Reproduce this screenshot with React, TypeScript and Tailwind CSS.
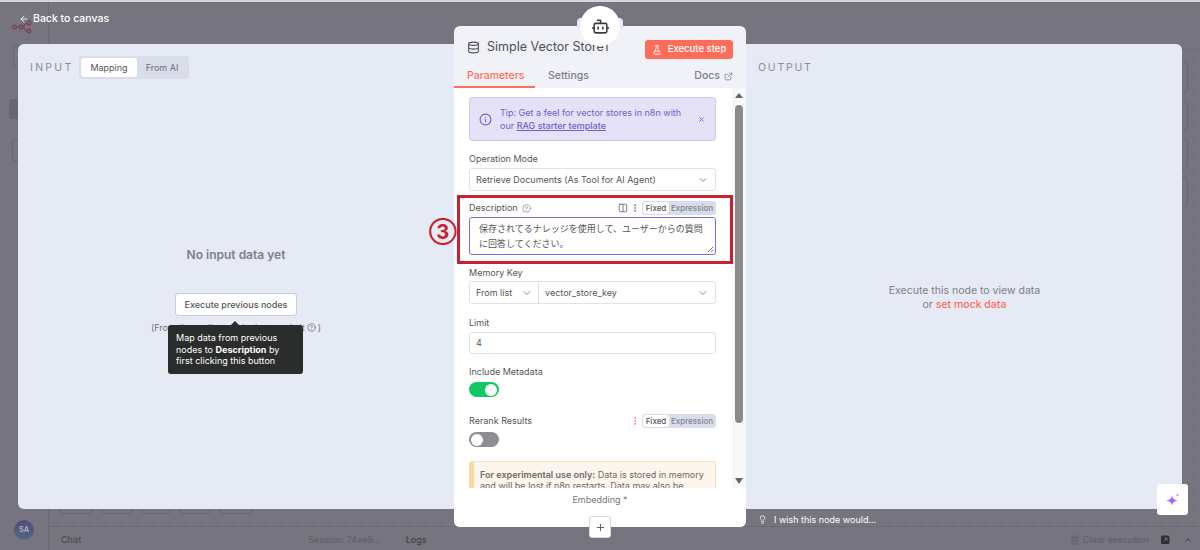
import { ArrowLeft, Bot, ChevronDown, ChevronUp, CircleHelp, Columns2, Database, EllipsisVertical, ExternalLink, FlaskConical, Info, Lightbulb, Plus, Trash2, X } from "lucide-react";

const font = { fontFamily: '"Inter", "Noto Sans CJK JP", sans-serif' };

function FixedExpression() {
  return (
    <div className="flex h-[14px] w-[74px] items-center rounded-[3px] bg-[#d9dde9] p-px text-[8px] font-medium">
      <span className="flex h-[12px] w-[26px] items-center justify-center rounded-[3px] bg-white text-[#555]">Fixed</span>
      <span className="flex-1 text-center text-[#7d8192]">Expression</span>
    </div>
  );
}

function Label({ children }: { children: React.ReactNode }) {
  return <div className="text-[9px] leading-[12px] text-[#555]">{children}</div>;
}

function Background() {
  return (
    <div className="flex h-full">
      <aside className="flex w-[49px] flex-col border-r border-[#6b6973] pl-[13px] pt-[18px]">
        <svg width="24" height="14" viewBox="0 0 24 14" fill="none" stroke="#7d3b55" strokeWidth="1.2" className="-ml-[1px]">
          <circle cx="2.5" cy="7" r="1.8" />
          <circle cx="9" cy="7" r="1.8" />
          <circle cx="17" cy="3" r="1.8" />
          <circle cx="17" cy="11" r="1.8" />
          <path d="M4.3 7 H7.2 M10.8 7 C13 7 12 3 15.2 3 M10.8 7 C13 7 12 11 15.2 11" />
        </svg>
        <div className="mt-[11px] h-[22px] w-[22px] rounded-[4px] border border-[#66646f]" />
        <div className="-ml-[4px] mt-[32px] h-[20px] w-[30px] rounded-[3px] bg-[#686672]" />
        <div className="-ml-[1px] mt-[20px] h-[23px] w-[23px] rounded-[4px] border border-[#66646f]" />
        <div className="mb-[10px] ml-[1px] mt-auto flex h-[20px] w-[20px] items-center justify-center self-start rounded-full bg-gradient-to-b from-[#55497f] to-[#4a6a83] text-[7.5px] font-medium text-[#b9b9c8]">SA</div>
      </aside>
      <main className="flex flex-1 flex-col">
        <div className="h-[48px] border-b border-[#6f6d78]" />
        <div className="flex flex-1 flex-col justify-between bg-[radial-gradient(#6e6c77_1px,transparent_1px)] bg-[length:16px_16px]">
          <div className="flex flex-col items-end gap-[7px] pr-[12px] pt-[12px]">
            {[0, 1, 2, 3].map((i) => (
              <div key={i} className="h-[31px] w-[30px] rounded-[4px] border border-[#686672]" />
            ))}
          </div>
          <div className="flex gap-[9px] pb-[12px] pl-[11px]">
            {[32, 31, 30, 31, 32].map((w, i) => (
              <div key={i} style={{ width: w }} className="h-[24px] rounded-[4px] border border-[#686672]" />
            ))}
          </div>
        </div>
        <div className="flex h-[24px] items-center border-t border-[#6b6973] pt-[2px] text-[9px]">
          <span className="ml-[12px] font-medium text-[#4a4a53]">Chat</span>
          <span className="ml-[227px] text-[#5d5c67]">Session: 74ee9...</span>
          <span className="ml-[25px] font-medium text-[#3f3f48]">Logs</span>
          <span className="ml-auto flex items-center gap-[3px] text-[#5d5c67]">
            <Trash2 size={10} /> Clear execution
          </span>
          <svg width="10" height="10" viewBox="0 0 10 10" className="ml-[11px]">
            <rect x="1" y="0.5" width="8.5" height="8.5" rx="1.5" fill="#2f2f36" />
            <path d="M3.5 6.5 L7 3 M4.5 3 H7 V5.5" stroke="#76747f" strokeWidth="0.9" fill="none" />
          </svg>
          <ChevronUp size={10} className="ml-[13px] mr-[7px] text-[#2f2f36]" />
        </div>
      </main>
    </div>
  );
}

function NodeCard() {
  return (
    <div className="absolute left-[454px] top-[26px] flex h-[501px] w-[292px] flex-col rounded-[6px] bg-[#f1f2f8]">
      <div className="flex h-[33px] items-end justify-between px-[13px]">
        <div className="flex items-center gap-[7px] pb-[2px] text-[12.5px] text-[#4f4f55]">
          <Database size={13} />
          <span>Simple Vector Store1</span>
        </div>
        <div className="flex h-[19px] w-[88px] items-center justify-center gap-[6px] rounded-[3px] bg-[#ff6d5a] text-[9.5px] font-medium text-white">
          <FlaskConical size={10} />
          Execute step
        </div>
      </div>

      {/* node icon sits on the top edge, over the title */}
      <div className="absolute left-[123px] top-[-8px] h-[10px] w-[46px] rounded-t-[4px] bg-[#e6eaf4]" />
      <div className="absolute left-[126px] top-[-20px] flex h-[40px] w-[40px] items-center justify-center rounded-full bg-white">
        <Bot size={19} strokeWidth={2} className="text-[#3d3d42]" />
      </div>

      <div className="mt-[10px] flex h-[14px] items-center justify-between pr-[13px] text-[10.5px] font-medium text-[#7d7d87]">
        <div className="flex">
          <span className="w-[81px] pl-[13px] text-[#ff6d5a]">Parameters</span>
          <span className="ml-[13px]">Settings</span>
        </div>
        <div className="flex items-center gap-[4px]">
          Docs
          <ExternalLink size={9} />
        </div>
      </div>
      <div className="mt-[3px] h-[2px] w-[81px] bg-[#ff6d5a]" />

      <div className="flex min-h-0 flex-1 flex-col rounded-b-[6px] bg-white">
        <div className="flex h-[400px]">
          <div className="w-[278px] overflow-hidden pl-[15px] pr-[16px] pt-[9px]">
            <div className="flex h-[44px] items-center rounded-[3px] border border-[#cfc9ee] bg-[#e5e1f7] pl-[9px] pr-[10px] text-[9px] leading-[13px] text-[#6f5fd0]">
              <Info size={13} className="shrink-0" />
              <div className="ml-[8px] flex-1">
                Tip: Get a feel for vector stores in n8n with
                <br />
                our <span className="font-medium underline">RAG starter template</span>
              </div>
              <X size={7} className="shrink-0" strokeWidth={3} />
            </div>

            <div className="mt-[12px]"><Label>Operation Mode</Label></div>
            <div className="mt-[3px] flex h-[23px] items-center justify-between rounded-[3px] border border-[#dfe2ea] px-[6px] text-[9px] text-[#555]">
              Retrieve Documents (As Tool for AI Agent)
              <ChevronDown size={12} className="text-[#8d8d95]" />
            </div>

            <div className="mt-[10px] flex h-[14px] items-center justify-between">
              <div className="flex items-center gap-[4px]">
                <Label>Description</Label>
                <CircleHelp size={9} className="text-[#8d8d95]" />
              </div>
              <div className="flex items-center gap-[2px] text-[#666]">
                <Columns2 size={10} />
                <EllipsisVertical size={10} />
                <FixedExpression />
              </div>
            </div>
            <div className="relative mt-[2px] h-[38px] rounded-[3px] border border-[#7b6fd6] px-[9px] py-[3px] text-[9px] leading-[15px] text-[#555]">
              保存されてるナレッジを使用して、ユーザーからの質問に回答してください。
              <svg width="7" height="7" viewBox="0 0 7 7" stroke="#555" strokeWidth="0.8" className="absolute bottom-[1px] right-[1px]">
                <path d="M1 6 L6 1 M4 6 L6 4" />
              </svg>
            </div>

            <div className="mt-[12px]"><Label>Memory Key</Label></div>
            <div className="mt-[2px] flex h-[23px] items-center rounded-[3px] border border-[#dfe2ea] text-[9px] text-[#555]">
              <div className="flex h-full w-[69px] items-center justify-between border-r border-[#dfe2ea] pl-[6px] pr-[5px]">
                From list
                <ChevronDown size={12} className="text-[#8d8d95]" />
              </div>
              <div className="flex flex-1 items-center justify-between px-[6px]">
                vector_store_key
                <ChevronDown size={12} className="text-[#8d8d95]" />
              </div>
            </div>

            <div className="mt-[13px]"><Label>Limit</Label></div>
            <div className="mt-[3px] flex h-[22px] items-center rounded-[3px] border border-[#dfe2ea] px-[6px] text-[9px] text-[#555]">4</div>

            <div className="mt-[12px]"><Label>Include Metadata</Label></div>
            <div className="mt-[4px] flex h-[15px] w-[30px] items-center justify-end rounded-full bg-[#12c765] px-[2px]">
              <div className="h-[12px] w-[12px] rounded-full bg-white" />
            </div>

            <div className="mt-[17px] flex h-[14px] items-center justify-between">
              <Label>Rerank Results</Label>
              <div className="flex items-center gap-[2px]">
                <EllipsisVertical size={10} className="text-[#ff6d5a]" />
                <FixedExpression />
              </div>
            </div>
            <div className="mt-[4px] flex h-[15px] w-[30px] items-center justify-start rounded-full bg-[#8d8d92] px-[2px]">
              <div className="h-[12px] w-[12px] rounded-full bg-white" />
            </div>

            <div className="mt-[14px] h-[60px] rounded-[3px] border border-[#f6e3c4] border-l-[5px] border-l-[#f6d9a5] bg-[#fdf6ec] pl-[6px] pr-[3px] pt-[7px] text-[9px] leading-[11px] text-[#6b6b6b]">
              <b className="font-semibold">For experimental use only:</b> Data is stored in memory and will be lost if n8n restarts. Data may also be
            </div>
          </div>
          <div className="relative w-[14px] bg-[#f8f8fb]">
            <div className="absolute left-[3px] top-[5px] h-0 w-0 border-x-[4px] border-b-[5px] border-x-transparent border-b-[#666]" />
            <div className="absolute left-[3px] top-[17px] h-[318px] w-[8px] rounded-full bg-[#8a8a8a]" />
            <div className="absolute left-[3px] top-[390px] h-0 w-0 border-x-[4px] border-t-[6px] border-x-transparent border-t-[#666]" />
          </div>
        </div>
        <div className="mt-[5px] text-center text-[9px] text-[#777]">Embedding *</div>
      </div>

      <div className="absolute left-[135px] top-[490px] flex h-[22px] w-[22px] items-center justify-center rounded-[3px] border border-[#d5d8e2] bg-white text-[#555]">
        <Plus size={11} />
      </div>
    </div>
  );
}

export default function App() {
  return (
    <div style={font} className="relative h-[550px] w-[1200px] overflow-hidden bg-[#76747f] pt-[2px]">
      <div className="absolute inset-x-0 top-0 h-[2px] bg-[#d9d5d4]" />
      <div className="h-[548px]">
        <Background />
      </div>

      {/* modal layer over the canvas */}
      <div className="absolute inset-0 flex flex-col pt-[2px]">
        <div className="flex h-[31px] items-center pl-[19px] pt-[3px] text-[10.5px] font-medium text-white">
          <ArrowLeft size={10} className="mr-[4px]" />
          Back to canvas
        </div>

        <div className="mx-[18px] mt-[11px] flex h-[465px] rounded-[6px] bg-[#e6eaf4]">
          <div className="flex w-[436px] flex-col">
            <div className="flex items-center pl-[12px] pt-[12px]">
              <span className="w-[49px] text-[10.5px] tracking-[0.22em] text-[#8b8d98]">INPUT</span>
              <div className="flex h-[23px] w-[110px] items-center rounded-[3px] bg-[#d9dde9] p-[2px] text-[9px]">
                <span className="flex h-[19px] w-[56px] items-center justify-center rounded-[3px] bg-white text-[#555]">Mapping</span>
                <span className="flex-1 text-center text-[#6d6f7b]">From AI</span>
              </div>
            </div>
            <div className="mt-[167px] text-center text-[12px] font-semibold text-[#7d7f89]">No input data yet</div>
            <div className="mt-[29px] flex justify-center">
              <div className="flex h-[23px] w-[122px] items-center justify-center rounded-[3px] border border-[#c9ccd6] bg-white text-[9px] font-medium text-[#555]">
                Execute previous nodes
              </div>
            </div>
            <div className="mt-[5px] flex items-center justify-center gap-[2px] text-[9px] text-[#6f717c]">
              (From the earliest node that needs it
              <CircleHelp size={9} /> )
            </div>
          </div>
          <div className="w-[304px]" />
          <div className="flex flex-1 flex-col">
            <div className="pt-[16px] text-[10.5px] tracking-[0.17em] text-[#8b8d98]">OUTPUT</div>
            <div className="mt-[208px] pr-[11px] text-center text-[10.5px] leading-[14px] text-[#7d7f89]">
              <div>Execute this node to view data</div>
              <div>or <span className="font-medium text-[#ff6d5a]">set mock data</span></div>
            </div>
          </div>
        </div>
      </div>

      <div className="absolute left-[168px] top-[325px] h-[49px] w-[135px] rounded-[3px] bg-[#2b2c2c] px-[8px] py-[7px] text-[9px] leading-[11.5px] text-white">
        <div className="absolute left-[63px] top-[-4px] h-0 w-0 border-x-[4px] border-b-[4px] border-x-transparent border-b-[#2b2c2c]" />
        Map data from previous nodes to <b className="font-bold">Description</b> by first clicking this button
      </div>

      <NodeCard />

      {/* annotation from the article: red box and number */}
      <div className="absolute left-[457px] top-[195px] h-[69px] w-[276px] border-[3px] border-[#c9202f]" />
      <div className="absolute left-[429px] top-[220px] text-[20px] leading-[24px] font-bold text-[#c9202f]">③</div>

      <div className="absolute left-[758px] top-[513px] flex items-center gap-[7px] text-[9px] text-white">
        <Lightbulb size={9} />
        I wish this node would...
      </div>

      <div className="absolute left-[1157px] top-[484px] flex h-[31px] w-[31px] items-center justify-center rounded-[3px] bg-white">
        <svg width="16" height="16" viewBox="0 0 16 16">
          <path d="M7 3 C7.6 6.4 8.6 7.4 12.5 8.5 C8.6 9.6 7.6 10.6 7 14 C6.4 10.6 5.4 9.6 1.5 8.5 C5.4 7.4 6.4 6.4 7 3 Z" fill="#a66cf0" />
          <path d="M12.5 1 C12.7 2.3 13.2 2.8 14.5 3 C13.2 3.2 12.7 3.7 12.5 5 C12.3 3.7 11.8 3.2 10.5 3 C11.8 2.8 12.3 2.3 12.5 1 Z" fill="#e58ad8" />
        </svg>
      </div>
    </div>
  );
}
